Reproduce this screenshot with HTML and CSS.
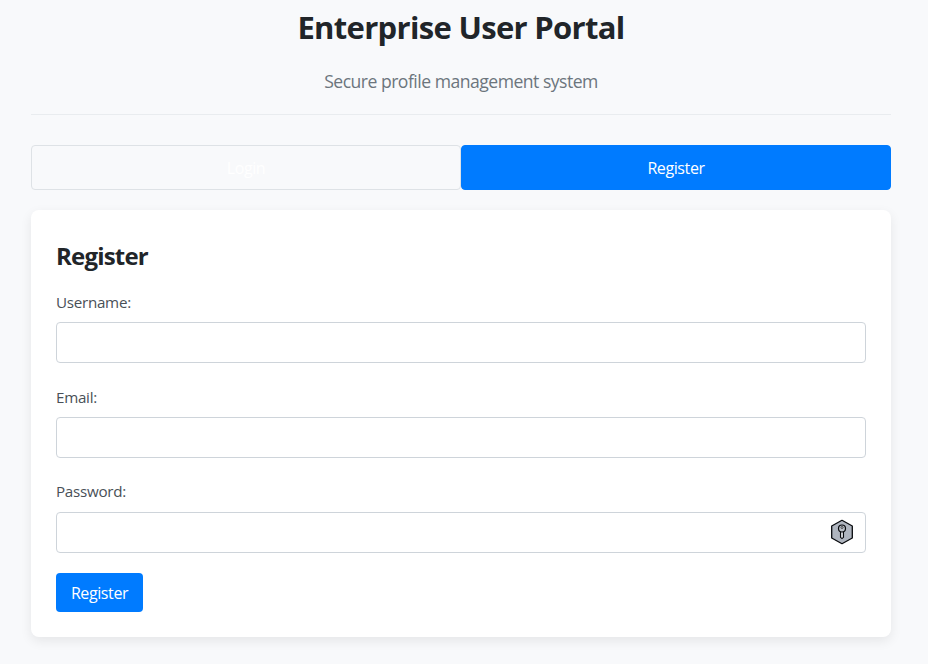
FILE: index.html
```html
<!DOCTYPE html>
<html lang="en">
<head>
<meta charset="utf-8">
<title>Enterprise User Portal</title>
<link rel="stylesheet" href="styles.css">
</head>
<body>
<div class="container">
  <header class="header">
    <h1>Enterprise User Portal</h1>
    <p>Secure profile management system</p>
  </header>
  <nav class="tabs">
    <button class="tab" type="button">Login</button>
    <button class="tab active" type="button">Register</button>
  </nav>
  <main class="card">
    <h2>Register</h2>
    <form>
      <div class="field">
        <label for="username">Username:</label>
        <input id="username" type="text">
      </div>
      <div class="field">
        <label for="email">Email:</label>
        <input id="email" type="text">
      </div>
      <div class="field">
        <label class="raised" for="password">Password:</label>
        <div class="control">
          <input id="password" type="password">
          <svg class="key" width="24" height="26" viewBox="0 0 24 26" fill="none" stroke="#080a0d">
            <path d="M12 1.3 22.3 7v12L12 24.7 1.7 19V7Z" fill="#afb5bf" stroke-width="1.3" stroke-linejoin="round"/>
            <path d="M10.5 12.3v6l1.5 1.3 1.5-1.3v-6" fill="#d5d8dd" stroke-width="1.1"/>
            <circle cx="12" cy="9.5" r="3.5" fill="#b9bec6" stroke-width="1.2"/>
            <circle cx="12" cy="8.5" r="1" fill="#e6e8eb" stroke-width=".7"/>
          </svg>
        </div>
      </div>
      <button class="submit" type="button">Register</button>
    </form>
  </main>
</div>
</body>
</html>
```

FILE: styles.css
```css
* { box-sizing: border-box; }

body {
  margin: 0;
  height: 664px;
  overflow: hidden;
  background: #f8f9fb;
  color: #212529;
  font-family: "Open Sans", "Noto Sans", sans-serif;
  font-size: 16px;
}

.container { width: 860px; margin-left: 31px; }

.header {
  height: 115px;
  border-bottom: 1px solid #e9ecef;
  text-align: center;
}

h1, h2, p { margin: 0; }

h1 {
  padding-top: 2px;
  font-size: 31px;
  line-height: 51px;
  font-weight: 700;
  letter-spacing: -.68px;
}

.header p {
  padding-top: 14px;
  font-size: 17.6px;
  line-height: 28px;
  letter-spacing: -.51px;
  color: #6c757d;
}

.tabs { display: flex; margin: 30px 0 20px; }

button {
  font-family: inherit;
  font-size: 16px;
  letter-spacing: -.4px;
  color: #fff;
}

.tab {
  flex: 1;
  height: 45px;
  padding: 0;
  border: 1px solid #dee2e6;
  border-radius: 4px;
  background: transparent;
}

.tab.active, .submit { background: #007bff; border-color: #007bff; }

.card {
  height: 427px;
  padding: 27px 25px 25px;
  border-radius: 8px;
  background: #fff;
  box-shadow: 0 4px 12px rgba(0, 0, 0, .08);
}

h2 {
  font-size: 24px;
  line-height: 38px;
  font-weight: 700;
  letter-spacing: -.8px;
}

form { padding-top: 15px; }

.field { height: 95px; }

label {
  display: block;
  height: 32px;
  font-size: 15.2px;
  line-height: 24px;
  letter-spacing: -.28px;
  color: #495057;
}

label.raised { line-height: 22px; }

input {
  display: block;
  width: 100%;
  height: 41px;
  padding: 10px;
  border: 1px solid #ced4da;
  border-radius: 4px;
  background: #fff;
}

.control { position: relative; }

.key { position: absolute; right: 12px; top: 7px; }

.submit {
  display: block;
  width: 87px;
  height: 39px;
  margin-top: -2px;
  padding: 0;
  border: 0;
  border-radius: 4px;
}
```
